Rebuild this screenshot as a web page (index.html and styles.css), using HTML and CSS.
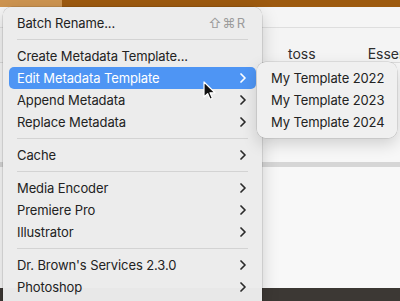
FILE: index.html
```html
<!DOCTYPE html>
<html lang="en">
<head>
    <meta charset="UTF-8">
    <title>Context Menu</title>
    <link rel="stylesheet" href="styles.css">
</head>
<body>
    <div class="app">
        <div class="titlebar"><div class="titlebar-light"></div></div>
        <div class="toolbar"></div>
        <div class="tabs">
            <span class="tab tab-toss">toss</span>
            <span class="tab tab-essen">Essen</span>
        </div>
        <div class="pane"></div>
        <div class="divider"></div>
        <div class="pane pane-lower"></div>
        <div class="dock"></div>
    </div>

    <!-- main context menu -->
    <div class="menu">
        <div class="item">
            <span class="label">Batch Rename...</span>
            <span class="shortcut">⇧⌘R</span>
        </div>
        <div class="sep"></div>
        <div class="item"><span class="label">Create Metadata Template...</span></div>
        <div class="item active">
            <span class="label">Edit Metadata Template</span>
            <svg class="chev" viewBox="0 0 6 10"><path d="M1 1l4 4-4 4"/></svg>
        </div>
        <div class="item">
            <span class="label">Append Metadata</span>
            <svg class="chev" viewBox="0 0 6 10"><path d="M1 1l4 4-4 4"/></svg>
        </div>
        <div class="item">
            <span class="label">Replace Metadata</span>
            <svg class="chev" viewBox="0 0 6 10"><path d="M1 1l4 4-4 4"/></svg>
        </div>
        <div class="sep"></div>
        <div class="item">
            <span class="label">Cache</span>
            <svg class="chev" viewBox="0 0 6 10"><path d="M1 1l4 4-4 4"/></svg>
        </div>
        <div class="sep"></div>
        <div class="item">
            <span class="label">Media Encoder</span>
            <svg class="chev" viewBox="0 0 6 10"><path d="M1 1l4 4-4 4"/></svg>
        </div>
        <div class="item">
            <span class="label">Premiere Pro</span>
            <svg class="chev" viewBox="0 0 6 10"><path d="M1 1l4 4-4 4"/></svg>
        </div>
        <div class="item">
            <span class="label">Illustrator</span>
            <svg class="chev" viewBox="0 0 6 10"><path d="M1 1l4 4-4 4"/></svg>
        </div>
        <div class="sep"></div>
        <div class="item">
            <span class="label">Dr. Brown's Services 2.3.0</span>
            <svg class="chev" viewBox="0 0 6 10"><path d="M1 1l4 4-4 4"/></svg>
        </div>
        <div class="item">
            <span class="label">Photoshop</span>
            <svg class="chev" viewBox="0 0 6 10"><path d="M1 1l4 4-4 4"/></svg>
        </div>
    </div>

    <!-- submenu -->
    <div class="menu submenu">
        <div class="item"><span class="label">My Template 2022</span></div>
        <div class="item"><span class="label">My Template 2023</span></div>
        <div class="item"><span class="label">My Template 2024</span></div>
    </div>

    <!-- mouse pointer -->
    <svg class="cursor" viewBox="0 0 14 20">
        <path d="M1 1v15l3.6-3.4 2.4 5.6 2.4-1-2.4-5.4h5z" fill="#111" stroke="#fff" stroke-width="1.2" stroke-linejoin="round"/>
    </svg>
</body>
</html>
```

FILE: styles.css
```css
html, body {
    margin: 0;
    padding: 0;
}

body {
    width: 400px;
    height: 301px;
    overflow: hidden;
    position: relative;
    font-family: Inter, "Noto Sans", sans-serif;
    background-color: #f6f6f6;
}

.app {
    display: flex;
    flex-direction: column;
    height: 301px;
}

.titlebar {
    height: 7px;
    background-color: #9d5a0f;
}

.titlebar-light {
    width: 62px;
    height: 7px;
    background-color: #cd9450;
}

.toolbar {
    height: 20px;
    background-color: #f5f5f5;
    border-bottom: 1px solid #dedede;
}

.tabs {
    height: 34px;
    background-color: #f4f4f4;
    border-bottom: 1px solid #dcdcdc;
    display: flex;
    align-items: flex-end;
    font-size: 14px;
    color: #2e2e2e;
    white-space: nowrap;
    overflow: hidden;
}

.tab {
    line-height: 16px;
}

.tab-toss {
    margin-left: 288px;
}

.tab-essen {
    margin-left: 52px;
}

.pane {
    height: 99px;
    background-color: #f7f7f7;
}

.divider {
    height: 5px;
    background-color: #d6d6d6;
}

.pane-lower {
    height: 121px;
    background-color: #f8f8f8;
}

.dock {
    flex: 1;
    background-color: #3c3834;
}

.menu {
    position: absolute;
    left: 3px;
    top: 7px;
    width: 259px;
    height: 294px;
    box-sizing: border-box;
    padding-top: 5px;
    background-color: rgba(236, 236, 236, 0.98);
    border-radius: 9px 9px 0 0;
    box-shadow: 0 0 0 0.5px rgba(0, 0, 0, 0.18), 0 6px 18px rgba(0, 0, 0, 0.18);
    font-size: 13px;
    letter-spacing: -0.1px;
    color: #222;
    white-space: nowrap;
}

.item {
    height: 22px;
    margin: 0 6px;
    padding: 0 10px 0 8px;
    border-radius: 5px;
    display: flex;
    align-items: center;
    justify-content: space-between;
}

.item.active {
    background-color: #4e95f4;
    color: #fff;
}

.shortcut {
    color: #9b9b9b;
    letter-spacing: 1px;
}

.chev {
    width: 6px;
    height: 10px;
    fill: none;
    stroke: #2a2a2a;
    stroke-width: 1.7;
    stroke-linecap: round;
    stroke-linejoin: round;
}

.item.active .chev {
    stroke: #fff;
}

.sep {
    height: 1px;
    margin: 5px 14px;
    background-color: #d3d3d3;
}

.submenu {
    left: 257px;
    top: 62px;
    width: 140px;
    height: 76px;
    border-radius: 9px;
    background-color: rgba(240, 240, 240, 0.99);
    box-shadow: 0 0 0 0.5px rgba(0, 0, 0, 0.16), 0 6px 16px rgba(0, 0, 0, 0.16);
}

.cursor {
    position: absolute;
    left: 203px;
    top: 81px;
    width: 14px;
    height: 20px;
}
```
